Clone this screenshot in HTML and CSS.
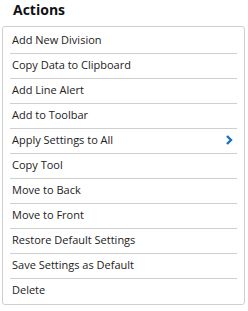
FILE: index.html
```html
<!DOCTYPE html>
<html lang="en">
<head>
  <meta charset="UTF-8">
  <title>Actions</title>
  <link rel="stylesheet" href="styles.css">
</head>
<body>
  <h2 class="menu-title">Actions</h2>
  <ul class="action-list">
    <li class="action-item">Add New Division</li>
    <li class="action-item">Copy Data to Clipboard</li>
    <li class="action-item">Add Line Alert</li>
    <li class="action-item">Add to Toolbar</li>
    <li class="action-item has-sub">
      <span>Apply Settings to All</span>
      <svg class="chevron" width="7" height="10" viewBox="0 0 7 10">
        <path d="M1 1 L5 5 L1 9" fill="none" stroke="#1b6fc2" stroke-width="2.4"/>
      </svg>
    </li>
    <li class="action-item">Copy Tool</li>
    <li class="action-item">Move to Back</li>
    <li class="action-item">Move to Front</li>
    <li class="action-item">Restore Default Settings</li>
    <li class="action-item">Save Settings as Default</li>
    <li class="action-item">Delete</li>
  </ul>
</body>
</html>
```

FILE: styles.css
```css
/* Global Styles */
body {
  font-family: "Open Sans", Arial, sans-serif;
  margin: 0;
  padding: 0 3px 0 2px;
  background-color: #fff;
  color: #222;
}

/* Title */
.menu-title {
  margin: 0;
  padding: 0 0 0 11px;
  height: 26px;
  font-size: 14px;
  font-weight: 700;
  line-height: 19px;
  color: #111;
}

/* Action list */
.action-list {
  list-style: none;
  margin: 0;
  padding: 2px 0 1px;
  border: 1px solid #cfcfcf;
  border-radius: 3px;
}

.action-item {
  display: flex;
  align-items: flex-start;
  justify-content: space-between;
  height: 21px;
  margin: 0 7px;
  padding: 3px 4px 0 2px;
  font-size: 11px;
  line-height: 15px;
  border-bottom: 1px solid #cfcfcf;
}

.action-item:last-child {
  border-bottom: none;
}

.chevron {
  display: block;
  margin-top: 3px;
}
```
